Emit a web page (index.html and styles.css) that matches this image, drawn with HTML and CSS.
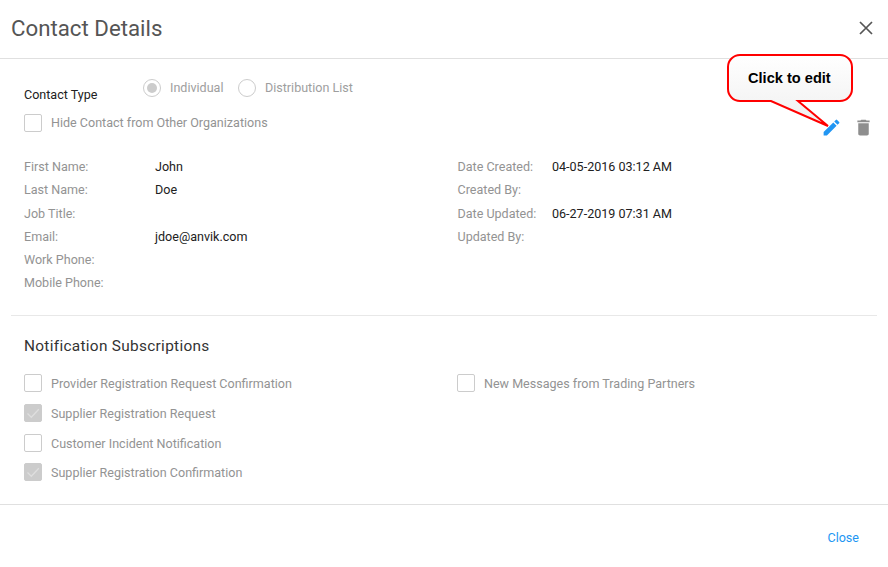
FILE: index.html
```html
<!DOCTYPE html>
<html lang="en">
<head>
<meta charset="utf-8">
<title>Contact Details</title>
<link rel="stylesheet" href="styles.css">
</head>
<body>
<div class="dialog">
  <header class="head">
    <h1 class="title">Contact Details</h1>
    <svg class="close" width="14" height="14" viewBox="0 0 14 14"><path d="M1 1L13 13M13 1L1 13" stroke="#555" stroke-width="1.7" fill="none"/></svg>
  </header>
  <section class="top">
    <div class="type-row">
      <span class="type-label">Contact Type</span>
      <div class="radios">
        <span class="radio on"></span><span class="opt">Individual</span>
        <span class="radio"></span><span class="opt">Distribution List</span>
      </div>
    </div>
    <label class="check hide"><span class="box"></span>Hide Contact from Other Organizations</label>
    <div class="actions">
      <svg class="act" width="21" height="21" viewBox="0 0 24 24"><path fill="#2196f3" d="M3 17.25V21h3.75L17.81 9.94l-3.75-3.75L3 17.25zM20.71 7.04a1 1 0 0 0 0-1.41l-2.34-2.34a1 1 0 0 0-1.41 0l-1.83 1.83 3.75 3.75 1.83-1.83z"/></svg>
      <svg class="act" width="21" height="21" viewBox="0 0 24 24"><path fill="#8e8e8e" d="M6 19c0 1.1.9 2 2 2h8c1.1 0 2-.9 2-2V7H6v12zM19 4h-3.5l-1-1h-5l-1 1H5v2h14V4z"/></svg>
    </div>
    <div class="details">
      <dl class="col">
        <dt>First Name:</dt><dd>John</dd>
        <dt>Last Name:</dt><dd>Doe</dd>
        <dt>Job Title:</dt><dd></dd>
        <dt>Email:</dt><dd>jdoe@anvik.com</dd>
        <dt>Work Phone:</dt><dd></dd>
        <dt>Mobile Phone:</dt><dd></dd>
      </dl>
      <dl class="col col-right">
        <dt>Date Created:</dt><dd>04-05-2016 03:12 AM</dd>
        <dt>Created By:</dt><dd></dd>
        <dt>Date Updated:</dt><dd>06-27-2019 07:31 AM</dd>
        <dt>Updated By:</dt><dd></dd>
      </dl>
    </div>
  </section>
  <section class="subs">
    <h2 class="subs-title">Notification Subscriptions</h2>
    <div class="subs-grid">
      <div class="subs-col">
        <label class="check"><span class="box"></span>Provider Registration Request Confirmation</label>
        <label class="check"><span class="box ticked"><svg width="18" height="18" viewBox="0 0 18 18"><path d="M3.5 9.5l3.8 3.8 7.5-8" stroke="#dedede" stroke-width="1.3" fill="none"/></svg></span>Supplier Registration Request</label>
        <label class="check"><span class="box"></span>Customer Incident Notification</label>
        <label class="check last"><span class="box ticked"><svg width="18" height="18" viewBox="0 0 18 18"><path d="M3.5 9.5l3.8 3.8 7.5-8" stroke="#dedede" stroke-width="1.3" fill="none"/></svg></span>Supplier Registration Confirmation</label>
      </div>
      <div class="subs-col">
        <label class="check"><span class="box"></span>New Messages from Trading Partners</label>
      </div>
    </div>
  </section>
  <footer class="foot"><a class="close-link">Close</a></footer>
  <div class="callout">
    <svg width="130" height="84" viewBox="0 0 130 84">
      <defs><linearGradient id="g" x1="0" y1="0" x2="0" y2="1"><stop offset="0" stop-color="#fff"/><stop offset="1" stop-color="#efefef"/></linearGradient></defs>
      <path d="M14 1H114a12 12 0 0 1 12 12V35a12 12 0 0 1-12 12H72L102 72 45 47H14A12 12 0 0 1 2 35V13A12 12 0 0 1 14 1Z" fill="url(#g)" stroke="#f00" stroke-width="2"/>
    </svg>
    <span class="callout-text">Click to edit</span>
  </div>
</div>
</body>
</html>
```
FILE: styles.css
```css
* { box-sizing: border-box; }
html, body { margin: 0; padding: 0; background: #fff; }
body { font-family: Roboto, sans-serif; font-size: 12.55px; color: #212121; }
.dialog { position: relative; width: 888px; height: 567px; overflow: hidden; }
.head { height: 59px; border-bottom: 1px solid #e0e0e0; display: flex; align-items: center; justify-content: space-between; padding: 0 15px 2px 11px; }
.title { margin: 0; font-size: 22.25px; font-weight: 400; color: #555; }
.top { position: relative; height: 257px; margin: 0 11px; padding: 0 13px; border-bottom: 1px solid #e8e8e8; }
.type-row { display: flex; height: 52px; }
.type-label { width: 119px; padding-top: 28px; line-height: 15px; }
.radios { display: flex; align-items: center; height: 57px; }
.radio { width: 18px; height: 18px; border: 1px solid #ccc; border-radius: 50%; display: flex; align-items: center; justify-content: center; margin-right: 9px; }
.radio.on::after { content: ""; width: 10px; height: 10px; border-radius: 50%; background: #ccc; }
.opt { color: #9e9e9e; margin-right: 14.5px; }
.check { display: flex; align-items: center; color: #939393; height: 18px; }
.box { width: 18px; height: 18px; flex: none; border: 1px solid #ccc; border-radius: 2px; margin-right: 9px; }
.box.ticked { background: #ccc; }
.box.ticked svg { display: block; margin: -1px; }
.hide { margin-top: 3px; align-items: flex-start; line-height: 17.5px; }
.actions { position: absolute; top: 58px; right: 3px; display: flex; gap: 11px; }
.details { display: flex; margin-top: 23.2px; }
.col { flex: none; display: grid; grid-template-columns: 131px 1fr; grid-auto-rows: 23.2px; margin: 0; width: 433.5px; line-height: 23.2px; }
.col-right { grid-template-columns: 94.5px 1fr; }
dt { color: #939393; }
dd { margin: 0; }
.subs { height: 189px; padding: 20px 24px 0; border-bottom: 1px solid #e0e0e0; }
.subs-title { margin: 0; font-size: 15.4px; font-weight: 400; letter-spacing: .3px; line-height: 20px; color: #333; }
.subs-grid { display: flex; margin-top: 18px; }
.subs-col { flex: none; width: 433px; display: flex; flex-direction: column; gap: 12px; }
.check.last { margin-top: -1px; }
.foot { display: flex; justify-content: flex-end; padding: 25px 29px; }
.close-link { color: #2196f3; }
.callout { position: absolute; left: 726px; top: 54px; width: 130px; height: 84px; }
.callout svg { display: block; }
.callout-text { position: absolute; left: 22px; top: 16px; font-family: "Liberation Sans", Arial, sans-serif; font-size: 14.6px; font-weight: 700; color: #000; }
```
